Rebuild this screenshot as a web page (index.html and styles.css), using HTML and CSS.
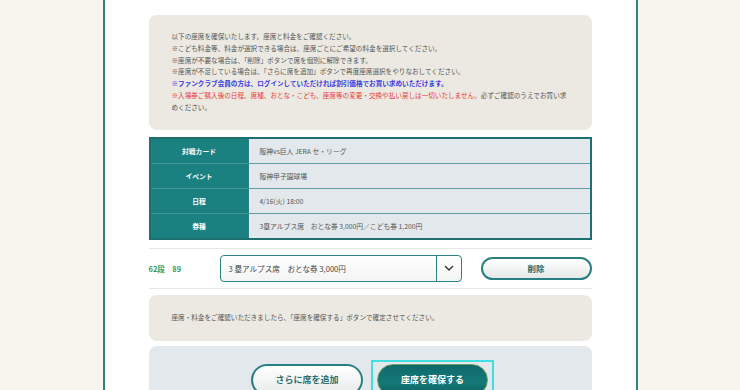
FILE: index.html
```html
<!DOCTYPE html>
<html lang="ja">
<head>
<meta charset="utf-8">
<title>座席確認</title>
<link rel="stylesheet" href="styles.css">
</head>
<body>
<div class="page">
  <div class="notice">
    <p>以下の座席を確保いたします。座席と料金をご確認ください。</p>
    <p>※こども料金等、料金が選択できる場合は、座席ごとにご希望の料金を選択してください。</p>
    <p>※座席が不要な場合は、「削除」ボタンで席を個別に解除できます。</p>
    <p>※座席が不足している場合は、「さらに席を追加」ボタンで再度座席選択をやりなおしてください。</p>
    <p class="blue">※ファンクラブ会員の方は、ログインしていただければ割引価格でお買い求めいただけます。</p>
    <p><span class="red">※入場券ご購入後の日程、席種、おとな・こども、座席等の変更・交換や払い戻しは一切いたしません。</span>必ずご確認のうえでお買い求めください。</p>
  </div>

  <table class="info">
    <tr><th>対戦カード</th><td>阪神vs巨人 JERA セ・リーグ</td></tr>
    <tr><th>イベント</th><td>阪神甲子園球場</td></tr>
    <tr><th>日程</th><td>4/16(火) 18:00</td></tr>
    <tr><th>券種</th><td>3塁アルプス席　おとな券 3,000円／こども券 1,200円</td></tr>
  </table>

  <div class="seat-row">
    <div class="seat-no">62段　89</div>
    <div class="select">
      <span class="select-text">3 塁アルプス席　おとな券 3,000円</span>
      <span class="select-arrow"><svg width="10" height="6" viewBox="0 0 10 6"><path d="M1 1 L5 5 L9 1" fill="none" stroke="#333" stroke-width="1.4"/></svg></span>
    </div>
    <button class="btn-del">削除</button>
  </div>

  <div class="notice notice2">
    <p>座席・料金をご確認いただきましたら、「座席を確保する」ボタンで確定させてください。</p>
  </div>

  <div class="actions">
    <button class="btn-light">さらに席を追加</button>
    <span class="focus-ring"><button class="btn-dark">座席を確保する</button></span>
  </div>
</div>
</body>
</html>
```

FILE: styles.css
```css
html, body {
  margin: 0;
  padding: 0;
  background: #f7f5ee;
  font-family: "Noto Sans CJK JP", "Noto Sans", sans-serif;
  color: #444;
}
.page {
  width: 443px;
  margin: 0 auto;
  padding: 15px 44px 0;
  background: #fff;
  border-left: 2px solid #2c8286;
  border-right: 2px solid #2c8286;
  height: 375px;
  overflow: hidden;
}
.notice {
  background: #ebe9e2;
  border-radius: 8px;
  padding: 16px 23px 16px;
  font-size: 6.6px;
  line-height: 11.8px;
  color: #555;
}
.notice p { margin: 0; }
.notice .blue { color: #3a3ae0; font-weight: bold; }
.notice .red { color: #e83a3a; }
.info {
  margin-top: 7px;
  width: 100%;
  border-collapse: collapse;
  border: 2px solid #1d6f70;
  font-size: 6.8px;
  line-height: 10px;
}
.info th {
  width: 97px;
  background: #1a8080;
  color: #fff;
  font-weight: bold;
  text-align: center;
  height: 24px;
  padding: 0;
  border-bottom: 1px solid #3f9797;
}
.info td {
  height: 24px;
  background: #e2e8eb;
  color: #555;
  padding: 0 0 0 11px;
  border-left: 1px solid #2a7f80;
  border-bottom: 1px solid #5f9ea0;
}
.info tr:last-child th, .info tr:last-child td { border-bottom: none; }
.seat-row {
  margin-top: 8px;
  border-top: 1px solid #e6e6e6;
  border-bottom: 1px solid #e6e6e6;
  height: 39px;
  display: flex;
  align-items: center;
}
.seat-no {
  width: 71px;
  color: #3e9a4e;
  font-size: 7.5px;
  font-weight: bold;
}
.select {
  width: 240px;
  height: 25px;
  border: 1px solid #2c8286;
  border-radius: 4px;
  background: linear-gradient(#ffffff, #f3f4f4);
  display: flex;
  align-items: center;
}
.select-text {
  flex: 1;
  padding-left: 8px;
  font-size: 7.6px;
  color: #444;
}
.select-arrow {
  width: 24px;
  height: 25px;
  border-left: 1px solid #2c8286;
  display: flex;
  align-items: center;
  justify-content: center;
}
.btn-del {
  margin-left: 19px;
  width: 111px;
  height: 23px;
  border: 2px solid #2a7f82;
  border-radius: 12px;
  background: linear-gradient(#ffffff, #e6e8e8);
  color: #2a6e70;
  font-family: inherit;
  font-size: 8.5px;
  font-weight: bold;
  padding: 0;
}
.notice2 {
  margin-top: 6px;
  padding: 17px 23px 17px;
  height: 12px;
}
.actions {
  margin-top: 5px;
  background: #e2e8eb;
  border-radius: 8px;
  height: 60px;
  display: flex;
  justify-content: center;
  align-items: flex-start;
  padding-top: 14px;
  padding-left: 5px;
  gap: 8px;
}
.btn-light {
  margin-top: 4px;
  width: 112px;
  height: 32px;
  border: 2px solid #2a7f82;
  border-radius: 16px;
  background: linear-gradient(#ffffff, #e8eaea);
  color: #2a6e70;
  font-family: inherit;
  font-size: 9px;
  font-weight: bold;
  padding: 0;
}
.focus-ring {
  display: block;
  border: 2px solid #43dede;
  padding: 2px 4px 0;
  height: 40px;
}
.btn-dark {
  width: 111px;
  height: 32px;
  border: 1px solid #6a9e6a;
  border-radius: 16px;
  background: linear-gradient(#0f6a6a, #157878 60%, #0d5f60);
  color: #fff;
  font-family: inherit;
  font-size: 9px;
  font-weight: bold;
  padding: 0;
}
```
